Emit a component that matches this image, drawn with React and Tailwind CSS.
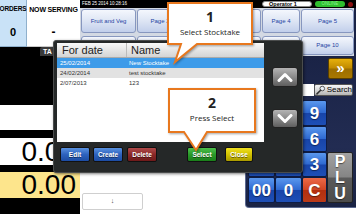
import React from "react";

const pageBtn =
  "h-full rounded-[3px] border border-[#8797bf] bg-[linear-gradient(180deg,#f4f7fd_0%,#dde5f4_50%,#c2cfeb_100%)] text-[6px] text-[#2443a3] flex items-center justify-center whitespace-nowrap overflow-hidden";

const blueKey =
  "bg-[linear-gradient(180deg,#5a98ee_0%,#2f6ad2_48%,#1845aa_52%,#1e4fb6_100%)]";
const redKey =
  "bg-[linear-gradient(180deg,#ec6a48_0%,#d04524_48%,#b3300f_52%,#bb3a18_100%)]";
const grayKey =
  "bg-[linear-gradient(180deg,#a2a2a2_0%,#858585_48%,#5a5a5a_52%,#4c4c4c_100%)]";

const dlgBtn =
  "h-full rounded-[2px] border border-[#111] text-white text-[6.5px] font-bold flex items-center justify-center [text-shadow:0_1px_0_rgba(0,0,0,0.5)]";

const narrow = "font-['Liberation_Sans_Narrow','Liberation_Sans',sans-serif]";

function LeftColumn() {
  return (
    <div className="w-[80px] flex flex-col shrink-0">
      <div className="h-[47px] flex">
        <div className="w-[27px] bg-[#c9e2f7] border-r border-b border-[#8fb0cc] flex flex-col items-center">
          <div className="mt-[6px] text-[6.5px] font-bold tracking-tight leading-none">ORDERS</div>
          <div className="mt-[14px] text-[11px] font-bold leading-none">0</div>
        </div>
        <div className="flex-1 bg-white border-b border-[#c8c8c8] flex flex-col items-center">
          <div className="mt-[6px] text-[7px] font-bold tracking-tight leading-none whitespace-nowrap">NOW SERVING</div>
          <div className="mt-[13px] text-[12px] font-bold leading-none">-</div>
        </div>
      </div>
      <div className="h-[58px] bg-black">
        <div className="ml-[40px] w-[13px] h-[9px] bg-[#3a3a3a] rounded-tl-[2px] text-white text-[7px] font-bold leading-[9px] pl-[3px] overflow-hidden whitespace-nowrap">
          TA
        </div>
      </div>
      <div className="h-[25px] bg-white" />
      <div className="h-[8px] bg-black" />
      <div className="h-[27px] bg-white">
        <div className="w-[53px] h-full overflow-hidden">
          <div className={`w-[80px] text-right pr-[4px] text-[28px] leading-[27px] ${narrow}`}>0.00</div>
        </div>
      </div>
      <div className="h-[7px] bg-black" />
      <div className={`h-[26px] bg-[#fde58c] text-right pr-[4px] text-[28px] leading-[26px] ${narrow}`}>
        0.00
      </div>
      <div className="flex-1 bg-black" />
    </div>
  );
}

function TopBar() {
  return (
    <div className="h-[8px] bg-black flex items-center text-white pr-[3px]">
      <div className="pl-[2px] text-[4.5px] leading-none whitespace-nowrap">FEB 25 2014 10:28:16</div>
      <div className="ml-auto w-[50px] h-[6px] bg-white rounded-full border border-[#888] text-black text-[5.5px] font-bold leading-[5px] pl-[6px] whitespace-nowrap">
        Operator 1
      </div>
      <div className="ml-[3px] w-[30px] h-[6px] bg-[#2fbf2f] rounded-full text-[#8ff08f] text-[4.5px] leading-[6px] text-center">
        ONLINE
      </div>
      <div className="ml-[3px] w-[5px] h-[5px] rounded-full bg-[#8a1010]" />
    </div>
  );
}

function PageButtons() {
  const widths = ["w-[55px]", "w-[46px]", "w-[77px]", "w-[38px]", "w-[53px]"];
  const row1 = ["Fruit and Veg", "Page 2", "Page 3", "Page 4", "Page 5"];
  const row2 = ["", "", "", "", "Page 10"];
  return (
    <div className="h-[48px] bg-[#d3d9e3] border-r-[2px] border-[#1a2346] flex flex-col gap-[3px] pt-[1px] pl-[1px]">
      <div className="h-[24px] flex gap-[1px]">
        {row1.map((t, i) => (
          <div key={i} className={`${widths[i]} ${pageBtn}`}>{t}</div>
        ))}
      </div>
      <div className="h-[19px] flex gap-[1px]">
        {row2.map((t, i) => (
          <div key={i} className={`${widths[i]} ${pageBtn}`}>{t}</div>
        ))}
      </div>
    </div>
  );
}

function Key({ label, tone }) {
  return (
    <div
      className={`${tone} border border-[#0e1c44] rounded-[2px] text-white font-bold text-[17px] leading-none flex items-center justify-center [text-shadow:0_1px_1px_rgba(0,0,0,0.5)]`}
    >
      {label}
    </div>
  );
}

function KeyPanel() {
  return (
    <div className="w-[111px] h-[152px] shrink-0 bg-[linear-gradient(180deg,#1a2346_0%,#222c52_60%,#1a2344_100%)] border-l border-b border-[#5a6890] rounded-bl-[4px] flex flex-col pl-[2px] pr-[3px] pt-[2px]">
      <div className="h-[21px] flex justify-end">
        <div className="w-[25px] h-full rounded-[2px] border border-[#5a4000] bg-[linear-gradient(180deg,#e6b00c_0%,#c08a00_48%,#9c6e00_52%,#a87800_100%)] text-white text-[15px] font-bold leading-none flex items-center justify-center pb-[2px]">
          »
        </div>
      </div>
      <div className="mt-[5px] h-[12px] flex">
        <div className="flex-1 bg-white" />
        <div className="w-[39px] h-full rounded-[2px] border border-[#555] bg-[linear-gradient(180deg,#f6f6f6_0%,#d8d8d8_50%,#b4b4b4_100%)] flex items-center pl-[1px] gap-[1px]">
          <svg width="10" height="10" viewBox="0 0 10 10">
            <circle cx="6.5" cy="3.5" r="2.4" fill="#e8eef4" stroke="#555" strokeWidth="1" />
            <line x1="4.8" y1="5.2" x2="1" y2="9" stroke="#333" strokeWidth="1.6" strokeLinecap="round" />
          </svg>
          <span className="text-[8px] leading-none text-black">Search</span>
        </div>
      </div>
      <div className="mt-[4px] grid grid-cols-[27px_27px_25px_26px] grid-rows-[26px_26px_25px_26px]">
        <Key label="" tone={blueKey} />
        <Key label="" tone={blueKey} />
        <Key label="9" tone={blueKey} />
        <div />
        <Key label="" tone={blueKey} />
        <Key label="" tone={blueKey} />
        <Key label="6" tone={blueKey} />
        <div />
        <Key label="" tone={blueKey} />
        <Key label="" tone={blueKey} />
        <Key label="3" tone={blueKey} />
        <div
          className={`${grayKey} row-span-2 border border-[#222] rounded-[2px] text-white font-bold text-[16px] leading-[16px] flex flex-col items-center justify-center [text-shadow:0_1px_1px_rgba(0,0,0,0.5)]`}
        >
          <span>P</span>
          <span>L</span>
          <span>U</span>
        </div>
        <Key label="00" tone={blueKey} />
        <Key label="0" tone={blueKey} />
        <Key label="C" tone={redKey} />
      </div>
    </div>
  );
}

function Chevron({ up }) {
  return (
    <svg width="16" height="10" viewBox="0 0 16 10">
      <polyline
        points={up ? "2,8.5 8,2.5 14,8.5" : "2,1.5 8,7.5 14,1.5"}
        fill="none"
        stroke="#fff"
        strokeWidth="3"
        strokeLinecap="round"
        strokeLinejoin="round"
      />
    </svg>
  );
}

function StocktakeDialog() {
  const rows = [
    { date: "25/02/2014", name: "New Stocktake", cls: "bg-[#3d9be9] text-white" },
    { date: "24/02/2014", name: "test stocktake", cls: "bg-[#e2e2e2] text-[#333]" },
    { date: "2/07/2013", name: "123", cls: "bg-white text-[#333]" },
  ];
  const arrowBtn =
    "w-[26px] rounded-[3px] border border-[#222] bg-[linear-gradient(180deg,#b4b4b4_0%,#8a8a8a_50%,#5e5e5e_100%)] flex items-center justify-center";
  return (
    <div className="absolute left-[53px] top-[40px] w-[250px] h-[133px] bg-[#252828] border border-[#4a4c4c] rounded-[3px] shadow-[1px_1px_3px_rgba(0,0,0,0.5)] flex flex-col">
      <div className="flex pl-[3px] pt-[2px]">
        <div className="w-[207px] h-[99px] bg-white">
          <div className="h-[15px] flex border-b border-[#aaa] bg-[linear-gradient(180deg,#f8f8f8_0%,#d4d4d4_100%)] text-[11px] text-[#222] leading-[14px]">
            <div className="w-[70px] border-r border-[#bbb] pl-[5px]">For date</div>
            <div className="pl-[4px]">Name</div>
          </div>
          {rows.map((r) => (
            <div key={r.date} className={`h-[10px] flex text-[6px] leading-[10px] ${r.cls}`}>
              <div className="w-[70px] pl-[3px]">{r.date}</div>
              <div className="pl-[2px]">{r.name}</div>
            </div>
          ))}
        </div>
        <div className="ml-[8px] flex flex-col">
          <div className={`${arrowBtn} mt-[24px] h-[20px]`}>
            <Chevron up />
          </div>
          <div className={`${arrowBtn} mt-[22px] h-[19px]`}>
            <Chevron />
          </div>
        </div>
      </div>
      <div className="mt-[5px] h-[15px] flex pl-[6px]">
        <div className={`${dlgBtn} w-[30px] bg-[linear-gradient(180deg,#5a92e0_0%,#2d62be_50%,#1c4ca2_100%)]`}>Edit</div>
        <div className={`${dlgBtn} w-[30px] ml-[3px] bg-[linear-gradient(180deg,#5a92e0_0%,#2d62be_50%,#1c4ca2_100%)]`}>Create</div>
        <div className={`${dlgBtn} w-[30px] ml-[4px] bg-[linear-gradient(180deg,#b04a4a_0%,#8a2828_50%,#6e1a1a_100%)]`}>Delete</div>
        <div className={`${dlgBtn} w-[30px] ml-[30px] bg-[linear-gradient(180deg,#4cc04c_0%,#2a9a2a_50%,#1a7e1a_100%)]`}>Select</div>
        <div className={`${dlgBtn} w-[28px] ml-[8px] bg-[linear-gradient(180deg,#f0e020_0%,#d2c200_50%,#aa9a00_100%)]`}>Close</div>
      </div>
    </div>
  );
}

function Callouts() {
  return (
    <>
      <svg
        className="absolute left-0 top-0 pointer-events-none drop-shadow-[1px_1px_1px_rgba(0,0,0,0.35)]"
        width="356"
        height="214"
        viewBox="0 0 356 214"
      >
        <path
          d="M168,3 H252 V44 H197 L175,62 L181,44 H168 Z"
          fill="#fff"
          stroke="#e8781e"
          strokeWidth="2"
          strokeLinejoin="miter"
        />
        <path
          d="M169,89 H255 V132 H207 L196,150 L184,132 H169 Z"
          fill="#fff"
          stroke="#e8781e"
          strokeWidth="2"
          strokeLinejoin="miter"
        />
      </svg>
      <div className="absolute left-[168px] top-[3px] w-[84px] h-[41px] flex flex-col items-center pt-[7px] text-[#222] font-['Open_Sans','Liberation_Sans',sans-serif]">
        <div className="text-[14px] font-bold leading-[14px]">1</div>
        <div className="mt-[3px] text-[8px] leading-[10px] whitespace-nowrap">Select Stocktake</div>
      </div>
      <div className="absolute left-[169px] top-[89px] w-[86px] h-[43px] flex flex-col items-center pt-[7px] text-[#222] font-['Open_Sans','Liberation_Sans',sans-serif]">
        <div className="text-[14px] font-bold leading-[14px]">2</div>
        <div className="mt-[3px] text-[8px] leading-[10px] whitespace-nowrap">Press Select</div>
      </div>
    </>
  );
}

export default function App() {
  return (
    <div className="relative w-[356px] h-[214px] overflow-hidden bg-white flex font-['Liberation_Sans',Arial,sans-serif]">
      <LeftColumn />
      <div className="flex-1 flex flex-col min-w-0">
        <TopBar />
        <PageButtons />
        <div className="flex-1 flex">
          <div className="flex-1 flex flex-col justify-end pl-[2px] pb-[4px]">
            <div className="w-[61px] h-[17px] border border-[#cfcfcf] rounded-[2px] flex items-center justify-center text-[7px] text-[#444]">
              ↓
            </div>
          </div>
          <KeyPanel />
        </div>
      </div>
      <StocktakeDialog />
      <Callouts />
    </div>
  );
}
